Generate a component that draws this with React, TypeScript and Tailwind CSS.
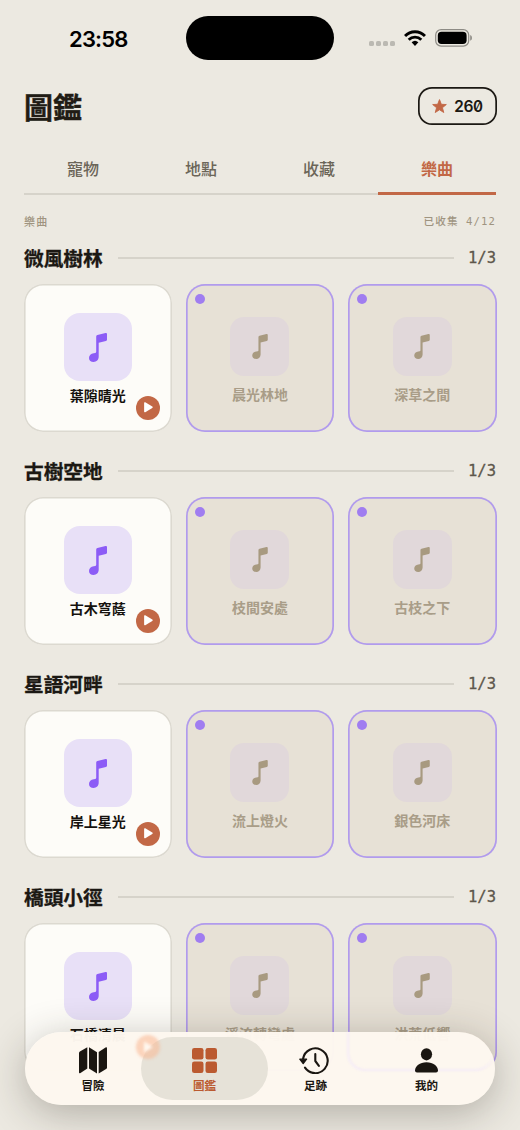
import React from 'react';

type Area = { name: string; tracks: [string, string, string] };

const areas: Area[] = [
  { name: '微風樹林', tracks: ['葉隙晴光', '晨光林地', '深草之間'] },
  { name: '古樹空地', tracks: ['古木穹蔭', '枝間安處', '古枝之下'] },
  { name: '星語河畔', tracks: ['岸上星光', '流上燈火', '銀色河床'] },
  { name: '橋頭小徑', tracks: ['石橋清晨', '溪流轉彎處', '洪荒低響'] },
];

function Note({ className }: { className: string }) {
  return (
    <svg viewBox="0 0 18 29" fill="currentColor" className={className}>
      <path d="M7.2 3.6Q7.2 2.4 8.4 2.1L16.5.1Q18 -.2 18 1.1V6.8Q18 7.8 16.9 8.1L9.7 9.8V23.8C9.7 26.8 7.5 29 4.6 29C1.9 29 0 27.5 0 24.9C0 22.3 1.9 20.6 4.7 20.2L6.3 20Q7.2 19.8 7.2 18.8Z" />
    </svg>
  );
}

function OwnedCard({ title }: { title: string }) {
  return (
    <div className="relative flex h-[148px] flex-col items-center rounded-[19px] bg-[#fdfcf8] pt-[29px] shadow-[inset_0_0_0_1.6px_#dcd9d0]">
      <div className="flex h-[68px] w-[68px] items-center justify-center rounded-[16px] bg-[#e8e0f7] text-[#8c5cf6]">
        <Note className="h-[29px] w-[18px]" />
      </div>
      <div className="mt-[4px] text-[14px] leading-5 font-bold text-[#15120e]">{title}</div>
      <div className="absolute right-[12px] bottom-[12.5px] flex h-6 w-6 items-center justify-center rounded-full bg-[#c26846]">
        <svg viewBox="0 0 10 12" className="ml-[1.5px] h-[10.5px] w-[9px] fill-white">
          <path d="M0 1.1Q0-.3 1.3.4L9.3 5.2Q10.4 6 9.3 6.8L1.3 11.6Q0 12.3 0 10.9Z" />
        </svg>
      </div>
    </div>
  );
}

function LockedCard({ title }: { title: string }) {
  return (
    <div className="relative flex h-[148px] flex-col items-center rounded-[19px] bg-[#e7e1d6] pt-[33px] shadow-[inset_0_0_0_1.7px_#b19bed]">
      <div className="absolute top-[9.5px] left-[9.5px] h-[10px] w-[10px] rounded-full bg-[#a07df0]" />
      <div className="flex h-[59px] w-[59px] items-center justify-center rounded-[14px] bg-[#e1d8da] text-[#a89a80]">
        <Note className="h-[25px] w-[16px]" />
      </div>
      <div className="mt-[8px] text-[14px] leading-5 font-bold text-[#a99d88]">{title}</div>
    </div>
  );
}

function AreaSection({ area }: { area: Area }) {
  return (
    <section className="h-[213px]">
      <div className="flex h-7 items-center">
        <h2 className="text-[19.7px] font-bold text-[#1b1813] [-webkit-text-stroke:0.3px_#1b1813]">{area.name}</h2>
        <div className="mr-[14px] ml-[15px] h-[2px] flex-1 bg-[#d6d3ca]" />
        <span className="font-['DejaVu_Sans_Mono',monospace] text-[15.5px] leading-7 text-[#5d574b] [-webkit-text-stroke:0.3px_#5d574b]">1/3</span>
      </div>
      <div className="-mx-[0.5px] mt-[12px] grid grid-cols-3 gap-[13.5px]">
        <OwnedCard title={area.tracks[0]} />
        <LockedCard title={area.tracks[1]} />
        <LockedCard title={area.tracks[2]} />
      </div>
    </section>
  );
}

function StatusBar() {
  return (
    <div className="flex h-[76px] items-start">
      <div className="w-[186px] pt-[25px] pl-[69px] font-['Inter',sans-serif] text-[22px] leading-7 font-semibold tracking-[-0.8px] text-black">23:58</div>
      <div className="mt-4 h-11 w-[148px] rounded-full bg-black" />
      <div className="mt-[28px] ml-[35px] flex h-5 items-center">
        <div className="mt-[11px] flex gap-[2.6px]">
          <i className="h-[4.5px] w-[4.5px] rounded-[1.6px] bg-[#bbb9b2]" />
          <i className="h-[4.5px] w-[4.5px] rounded-[1.6px] bg-[#bbb9b2]" />
          <i className="h-[4.5px] w-[4.5px] rounded-[1.6px] bg-[#bbb9b2]" />
          <i className="h-[4.5px] w-[4.5px] rounded-[1.6px] bg-[#bbb9b2]" />
        </div>
        <svg viewBox="0 0 22 16" className="ml-[9px] h-4 w-[22px]">
          <g fill="none" stroke="#000" strokeWidth="2.9">
            <path d="M1 6C6.4.3 15.6.3 21 6" />
            <path d="M4.7 9.7C8.2 6.2 13.8 6.2 17.3 9.7" />
          </g>
          <path d="M7.6 12.3Q11 9.3 14.4 12.3L11 15.9Z" />
        </svg>
        <svg viewBox="0 0 37 18" className="ml-[9px] h-[18px] w-[37px]">
          <rect x=".7" y=".7" width="33" height="16.4" rx="5.4" fill="none" stroke="#8d8b85" strokeWidth="1.2" />
          <rect x="2.8" y="2.8" width="28.8" height="12.2" rx="3.7" />
          <path d="M35.2 6.1Q37 6.8 37 8.9T35.2 11.7Z" fill="#8d8b85" />
        </svg>
      </div>
    </div>
  );
}

function NavLabel({ children }: { children: React.ReactNode }) {
  return <span className="text-[11.5px] leading-4 font-bold">{children}</span>;
}

function BottomNav() {
  return (
    <nav className="absolute top-[1032px] left-[25px] isolate flex h-[73px] w-[470px] rounded-full bg-[#fdf7ef]/98 px-[4px] py-[5px] text-[#1a1611] shadow-[0_8px_40px_rgba(50,45,35,0.32)]">
      <div className="absolute top-0 left-[322px] -z-10 h-[39px] w-[146px] rounded-b-[18px] border-b-2 border-l-2 border-[#f3e8fb]/70 blur-[1px]" />
      <div className="flex w-[128px] flex-col items-center pt-[10px]">
        <svg viewBox="0 0 28 27" className="h-[27px] w-[28px]" fill="currentColor">
          <path d="M0 6Q0 5 .9 4.4L8.3.2V21.5L1.5 25.9Q0 26.8 0 25.2Z" />
          <path d="M10 .2L18 5.3V26.6L10 21.5Z" />
          <path d="M19.7 5L26.5.6Q28 -.3 28 1.3V20.5Q28 21.5 27.1 22.1L19.7 26.6Z" />
        </svg>
        <div className="mt-[3px] flex"><NavLabel>冒險</NavLabel></div>
      </div>
      <div className="-ml-[16px] flex w-[127px] flex-col items-center rounded-full bg-[#e6e2d8] pt-[10.5px] text-[#bb5a30]">
        <svg viewBox="0 0 25 25" className="h-[25px] w-[25px]" fill="currentColor">
          <rect width="11.5" height="11.5" rx="2.3" />
          <rect x="13.5" width="11.5" height="11.5" rx="2.3" />
          <rect y="13.5" width="11.5" height="11.5" rx="2.3" />
          <rect x="13.5" y="13.5" width="11.5" height="11.5" rx="2.3" />
        </svg>
        <div className="mt-[4.5px] flex"><NavLabel>圖鑑</NavLabel></div>
      </div>
      <div className="-ml-[16px] flex w-[127px] flex-col items-center pt-[10px]">
        <svg viewBox="0 0 30 27" className="mr-[3px] h-[27px] w-[30px]" fill="none" stroke="currentColor" strokeWidth="2.1" strokeLinecap="round" strokeLinejoin="round">
          <path d="M4.1 11.5A12.4 12.4 0 1 1 6 20.7" />
          <path d="M16.3 7V14L19.9 18.8" />
          <path d="M.8 12.2H7.6L4.2 16.6Z" fill="currentColor" strokeWidth="1.3" />
        </svg>
        <div className="mt-[3px] flex"><NavLabel>足跡</NavLabel></div>
      </div>
      <div className="-ml-[16px] flex w-[127px] flex-col items-center pt-[10.5px]">
        <svg viewBox="0 0 23 25" className="h-[25px] w-[23px]" fill="currentColor">
          <ellipse cx="11.5" cy="6.3" rx="5.6" ry="6.1" />
          <path d="M11.5 14.3C4.8 14.3 0 18.4 0 22.6Q0 24.6 2 24.6H21Q23 24.6 23 22.6C23 18.4 18.2 14.3 11.5 14.3Z" />
        </svg>
        <div className="mt-[4.5px] flex"><NavLabel>我的</NavLabel></div>
      </div>
      <div className="absolute top-[3px] left-[111px] flex h-6 w-6 items-center justify-center rounded-full bg-[#fbb48c]/50 blur-[1.5px]">
        <svg viewBox="0 0 10 12" className="ml-[1px] h-[12px] w-[9px] fill-[#fff8f0]">
          <path d="M0 0L10 6L0 12Z" />
        </svg>
      </div>
    </nav>
  );
}

export default function App() {
  return (
    <div className="relative h-[1130px] w-[520px] overflow-hidden bg-[#ece9e1] font-['Noto_Sans_CJK_TC',sans-serif]">
      <StatusBar />
      <div className="px-6">
        <header className="flex h-[60px] items-center justify-between">
          <h1 className="pt-[1px] text-[29px] font-bold text-[#211c15] [-webkit-text-stroke:0.4px_#211c15]">圖鑑</h1>
          <div className="-mr-[1px] flex h-[38px] w-[79px] items-center rounded-[14px] pl-[14px] shadow-[inset_0_0_0_1.7px_#1b1813]">
            <svg viewBox="0 0 24 23" className="h-[14px] w-[15px] fill-[#c26846] stroke-[#c26846]" strokeWidth="1.5" strokeLinejoin="round">
              <path d="M12 1L15 8.7L23.2 9.1L16.8 14.3L19 22.2L12 17.7L5 22.2L7.2 14.3L.8 9.1L9 8.7Z" />
            </svg>
            <span className="mt-[1px] ml-[7px] font-['Inter',monospace] text-[15.5px] leading-5 font-semibold tracking-[-0.5px] text-[#1b1813] [font-feature-settings:'zero','tnum']">260</span>
          </div>
        </header>
        <div className="grid h-[59px] grid-cols-4 border-b-2 border-[#d6d3ca] pt-[20px] text-center text-[16px] leading-6 font-medium text-[#6b6558]">
          <div>寵物</div>
          <div>地點</div>
          <div>收藏</div>
          <div className="h-[39px] border-b-3 border-[#c26846] font-bold text-[#c26846]">樂曲</div>
        </div>
        <div className="mt-[16px] flex h-5 items-center justify-between text-[11px] font-medium text-[#9f9480]">
          <span className="tracking-[1.2px]">樂曲</span>
          <span className="font-['DejaVu_Sans_Mono','Noto_Sans_CJK_TC',monospace] text-[10.6px] leading-5 tracking-[1.1px]">已收集 4/12</span>
        </div>
        <main className="mt-[13px]">
          {areas.map((area) => (
            <AreaSection key={area.name} area={area} />
          ))}
        </main>
      </div>
      <BottomNav />
    </div>
  );
}
